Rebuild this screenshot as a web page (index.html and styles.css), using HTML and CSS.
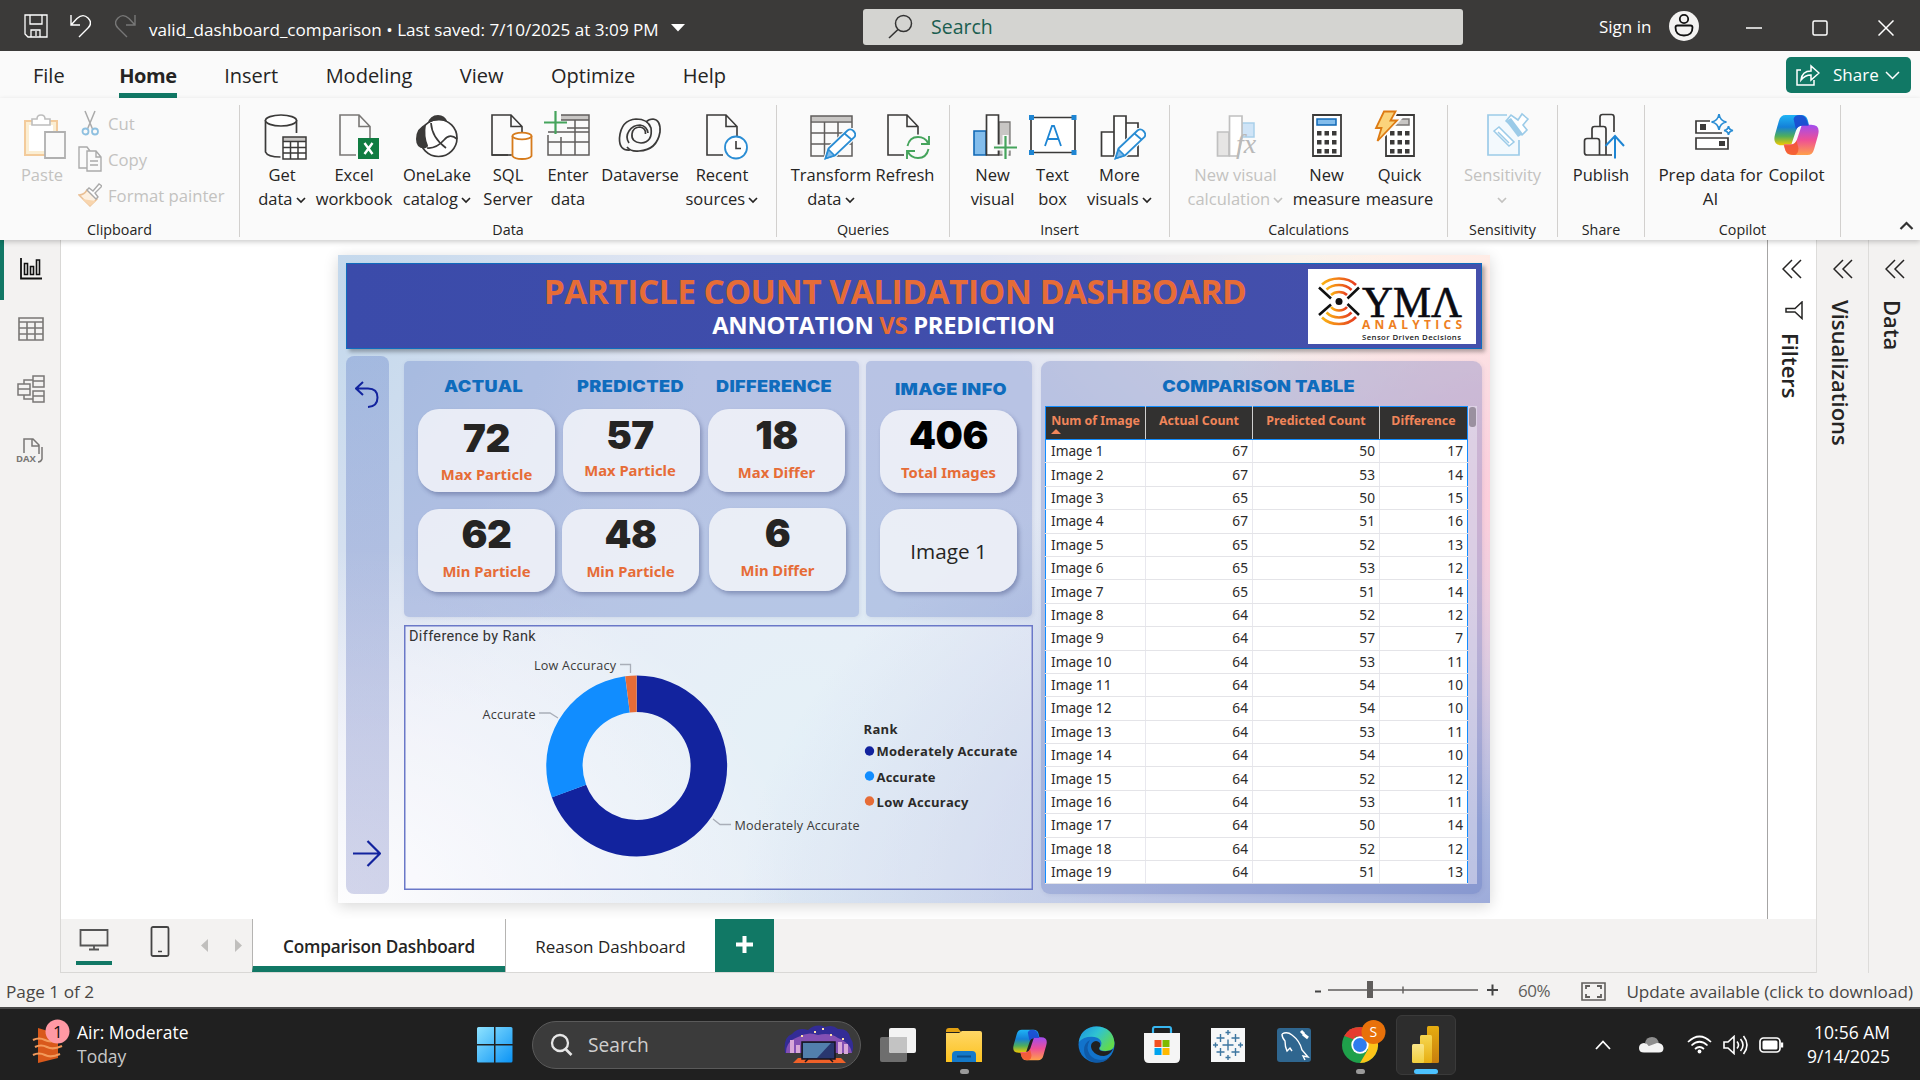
FILE: index.html
```html
<!DOCTYPE html>
<html lang="en">
<head>
<meta charset="utf-8">
<title>valid_dashboard_comparison</title>
<link rel="stylesheet" href="styles.css">
</head>
<body>
<svg class="defs" width="0" height="0" aria-hidden="true">
  <defs>
    <linearGradient id="cpA" x1="0" y1="0" x2="0" y2="1"><stop offset="0" stop-color="#1fb4f5"/><stop offset=".4" stop-color="#1480d8"/><stop offset=".7" stop-color="#4fae5c"/><stop offset="1" stop-color="#f4c900"/></linearGradient>
    <linearGradient id="cpB" x1="0" y1="0" x2="0" y2="1"><stop offset="0" stop-color="#a04cf0"/><stop offset=".5" stop-color="#ee4f96"/><stop offset="1" stop-color="#ffa04a"/></linearGradient>
    <linearGradient id="winG" x1="0" y1="0" x2="1" y2="1"><stop offset="0" stop-color="#8fe3ff"/><stop offset="1" stop-color="#0a93f5"/></linearGradient>
    <linearGradient id="fold" x1="0" y1="0" x2="0" y2="1"><stop offset="0" stop-color="#ffd766"/><stop offset="1" stop-color="#fcc21f"/></linearGradient>
    <linearGradient id="edgeA" x1="0" y1="0" x2="1" y2=".6"><stop offset="0" stop-color="#1a8fe0"/><stop offset=".5" stop-color="#2fc3d2"/><stop offset="1" stop-color="#62da4c"/></linearGradient>
    <linearGradient id="pbA" x1="0" y1="0" x2="0" y2="1"><stop offset="0" stop-color="#e6ad10"/><stop offset="1" stop-color="#c87e0e"/></linearGradient>
    <linearGradient id="pbB" x1="0" y1="0" x2="0" y2="1"><stop offset="0" stop-color="#f6d751"/><stop offset="1" stop-color="#e6ad10"/></linearGradient>
    <linearGradient id="pbC" x1="0" y1="0" x2="0" y2="1"><stop offset="0" stop-color="#f9e589"/><stop offset="1" stop-color="#f2cf3c"/></linearGradient>
    <linearGradient id="logoG" x1="0" y1="0" x2="1" y2="0"><stop offset="0" stop-color="#fbb413"/><stop offset="1" stop-color="#e63b1f"/></linearGradient>
    <symbol id="page" viewBox="0 0 32 42"><path d="M31 24V12.500L20 1H1v40h16M20 1v11.500h11" fill="none" stroke="currentColor" stroke-width="1.600"/></symbol>
    <symbol id="pencil" viewBox="0 0 32 32"><path d="M1.500 30.500l3-10L23.500 2.500q3-2.500 6 .500t1 6L11 27.500z" fill="#fff" stroke="#fafafa" stroke-width="4"/><path d="M1.500 30.500l3-10L23.500 2.500q3-2.500 6 .500t1 6L11 27.500zM20.500 5.500l7 6" fill="#fff" stroke="#2a8dd4" stroke-width="1.800"/><path d="M1.500 30.500l3-9 6 6z" fill="#83bdec" stroke="#2a8dd4" stroke-width="1.500"/></symbol>
    <symbol id="copilot" viewBox="0 0 46 41"><path d="M12 0h16q5 0 6.500 5l1.500 6h-7q-5 0-6.500 5l-5 15q-1.500 0-5 0H8Q-2 31 1 20L5 6Q6.500 0 12 0z" fill="url(#cpA)"/><path d="M34 41H18q-5 0-6.500-5L10 30h7q5 0 6.500-5l5-15h9.500q10 0 7 11L41 35q-1.500 6-7 6z" fill="url(#cpB)"/><path d="M26 0q6 0 7.500 5l2 6h-7q-4 0-6 4L20 4q1-4 6-4z" fill="#1b45cf" opacity=".85"/><path d="M20 41q-7 0-8.500-5L10 31h6q5 0 7-5l2 8q0 7-5 7z" fill="#f2542e" opacity=".8"/></symbol>
    <symbol id="calc" viewBox="0 0 30 43"><path d="M1 1h28v41H1z" fill="#fff" stroke="#3b3a39" stroke-width="1.800"/><path d="M5 17h4.500v4.500H5zm7.500 0H17v4.500h-4.500zm7.500 0h4.500v4.500H20zM5 26h4.500v4.500H5zm7.500 0H17v4.500h-4.500zm7.500 0h4.500v4.500H20zM5 35h4.500v4.500H5zm7.500 0H17v4.500h-4.500zm7.500 0h4.500v4.500H20z" fill="#3b3a39"/></symbol>
    <symbol id="dbl" viewBox="0 0 20 20"><path d="M10 1L1 10l9 9M19 1l-9 9 9 9" fill="none" stroke="#252423" stroke-width="1.500"/></symbol>
    <symbol id="chev" viewBox="0 0 10 7"><path d="M1 1l4 4 4-4" fill="none" stroke="currentColor" stroke-width="1.700"/></symbol>
  </defs>
</svg>

<div class="screen">
<header class="titlebar">
  <svg class="tb-save" width="24" height="24" viewBox="0 0 24 24"><path d="M1 1h22v22H4l-3-3zM6 1v9h12V1M7 23v-7h9v7M12 17v5" fill="none" stroke="#fff" stroke-width="1.300"/></svg>
  <svg class="tb-undo" width="21" height="24" viewBox="0 0 21 24"><path d="M1 1v10h9M1 11L7 4.500Q13-1 18 4t0 10l-9 9" fill="none" stroke="#fff" stroke-width="1.400"/></svg>
  <svg class="tb-redo" width="21" height="24" viewBox="0 0 21 24"><path d="M20 1v10h-9M20 11l-6-6.500Q8-1 3 4t0 10l9 9" fill="none" stroke="#777" stroke-width="1.400"/></svg>
  <span class="tb-name">valid_dashboard_comparison • Last saved: 7/10/2025 at 3:09 PM</span>
  <svg class="tb-caret" width="14" height="8" viewBox="0 0 14 8"><path d="M0 0h14L7 7.500z" fill="#fff"/></svg>
  <div class="tb-search">
    <svg width="25" height="25" viewBox="0 0 25 25"><circle cx="15.500" cy="9.500" r="8" fill="none" stroke="#333" stroke-width="1.500"/><path d="M10 15.500L1 24" stroke="#333" stroke-width="1.600"/></svg>
    <span>Search</span>
  </div>
  <span class="tb-sign">Sign in</span>
  <svg class="tb-user" width="30" height="30" viewBox="0 0 30 30"><circle cx="15" cy="15" r="15" fill="#f3f2f1"/><circle cx="15" cy="8" r="4.200" fill="none" stroke="#111" stroke-width="1.800"/><path d="M6.500 16.500q0-2 2-2h13q2 0 2 2 0 8-8.500 8t-8.500-8z" fill="none" stroke="#111" stroke-width="1.800"/></svg>
  <svg class="tb-min" width="16" height="16" viewBox="0 0 16 16"><path d="M0 8h16" stroke="#fff" stroke-width="1.500"/></svg>
  <svg class="tb-max" width="16" height="16" viewBox="0 0 16 16"><rect x="1" y="1" width="14" height="14" rx="1.500" fill="none" stroke="#fff" stroke-width="1.500"/></svg>
  <svg class="tb-close" width="16" height="16" viewBox="0 0 16 16"><path d="M.5.5l15 15M15.500.5l-15 15" stroke="#fff" stroke-width="1.500"/></svg>
</header>

<nav class="menu">
  <span>File</span><span class="on">Home</span><span>Insert</span><span>Modeling</span><span>View</span><span>Optimize</span><span>Help</span>
  <div class="share">
    <svg width="24" height="22" viewBox="0 0 24 22"><path d="M5 6H1v15h17v-5M5 16q1-9 10-9V2l8 7-8 7v-5q-6 0-10 5z" fill="none" stroke="#fff" stroke-width="1.500"/></svg>
    <span>Share</span>
    <svg width="15" height="9" viewBox="0 0 15 9"><path d="M1 1l6.500 6.500L14 1" fill="none" stroke="#fff" stroke-width="1.500"/></svg>
  </div>
</nav>

<section class="ribbon">
  <div class="group g-clip">
    <div class="items">
      <div class="btn w-paste off"><svg width="50" height="50" viewBox="0 0 50 50"><path d="M8 11h32v34H8z" fill="#fff" stroke="#f3cb9b" stroke-width="2"/><path d="M10.500 13.500h27v29h-27z" fill="none" stroke="#fbeed3" stroke-width="3"/><path d="M15 15v-6h5q0-4 4-4t4 4h5v6z" fill="#fff" stroke="#bdbdbd" stroke-width="1.600"/><path d="M28 22h20v26H28z" fill="#fafafa" stroke="#b0b0b0" stroke-width="1.800"/></svg><span>Paste</span></div>
      <div class="clip-list off">
        <div><svg width="24" height="26" viewBox="0 0 24 26"><path d="M7 1l7.500 18M17 1L9.500 19" stroke="#aaa" stroke-width="1.500"/><circle cx="7.500" cy="21.500" r="3" fill="none" stroke="#8fc0e0" stroke-width="1.800"/><circle cx="17" cy="21.500" r="3" fill="none" stroke="#8fc0e0" stroke-width="1.800"/></svg><span>Cut</span></div>
        <div><svg width="24" height="26" viewBox="0 0 24 26"><path d="M9 22H1V1h8l3 4M9 5h9l5 6v14H9zM18 5v6h5M12 15h8M12 19h8" fill="none" stroke="#aaa" stroke-width="1.400"/></svg><span>Copy</span></div>
        <div><svg width="24" height="26" viewBox="0 0 24 26"><path d="M9 8l10 9-7 7L1 13q5 0 8-5z" fill="#fdf0e0" stroke="#eabf93" stroke-width="1.500"/><path d="M4 17l14 2-6 5z" fill="#f8d5ae"/><path d="M9 8l2-2 4 3 6-7 3 2-7 7 3 4-2 2z" fill="#fff" stroke="#aaa" stroke-width="1.400"/></svg><span>Format painter</span></div>
      </div>
    </div>
    <div class="glabel">Clipboard</div>
  </div>

  <div class="group g-data">
    <div class="items">
      <div class="btn w72"><svg width="50" height="50" viewBox="0 0 50 50"><path d="M8.500 10v32q2 5 15 5M39.500 10v13" fill="none" stroke="#3b3a39" stroke-width="1.700"/><ellipse cx="24" cy="10.500" rx="15.500" ry="5.500" fill="#fff" stroke="#3b3a39" stroke-width="1.700"/><path d="M26 27h23v22H26z" fill="#fff"/><path d="M26 27h23v4H26z" fill="#c8c6c4"/><path d="M26 27h23v22H26zM26 31.500h23M26 37.500h23M26 43h23M33.500 31v18M41 31v18" fill="none" stroke="#3b3a39" stroke-width="1.500"/></svg><span>Get<br>data <svg class="cv"><use href="#chev"/></svg></span></div>
      <div class="btn w72"><svg width="50" height="50" viewBox="0 0 50 50"><g color="#797775"><use href="#page" x="10" y="4" width="32" height="42"/></g><path d="M29 28h21v21H29z" fill="#107c41"/><path d="M35.500 33l8 11M43.500 33l-8 11" stroke="#fff" stroke-width="2.400"/></svg><span>Excel<br>workbook</span></div>
      <div class="btn w94"><svg width="50" height="50" viewBox="0 0 50 50"><circle cx="26.500" cy="28" r="18.500" fill="#fff" stroke="#3b3a39" stroke-width="1.700"/><path d="M15.500 13.500Q18 5 26 5q7 0 9.500 7-10-4-20 1.500z" fill="#3b3a39"/><path d="M14 14Q4 18 4 29q0 9 8 9.500 4-1 4-3-4-9-2-21.500z" fill="#3b3a39"/><path d="M19 13q1 15 15 25M15 38q9 1 17-8 6-7 13-1" fill="none" stroke="#3b3a39" stroke-width="1.700"/></svg><span>OneLake<br>catalog <svg class="cv"><use href="#chev"/></svg></span></div>
      <div class="btn w48"><svg width="50" height="50" viewBox="0 0 50 50"><g color="#3b3a39"><use href="#page" x="8" y="4" width="32" height="42"/></g><path d="M8.800 45h20" stroke="#3b3a39" stroke-width="1.600"/><path d="M29.500 26v20q2 3 9.500 3t9.500-3V26" fill="#fff" stroke="#d67b1c" stroke-width="1.800"/><ellipse cx="39" cy="26" rx="9.500" ry="3.300" fill="#fff" stroke="#d67b1c" stroke-width="1.800"/></svg><span>SQL<br>Server</span></div>
      <div class="btn w72"><svg width="50" height="50" viewBox="0 0 50 50"><path d="M18 5h28v5H18z" fill="#c8c6c4"/><path d="M18 5h28v40H5V25M18 10h28M24 18h22M5 32h41M5 22h41M32 10v35M18 27v18" fill="none" stroke="#605e5c" stroke-width="1.500"/><path d="M1 12.500h23M12.500 1v23" stroke="#45a45c" stroke-width="2.200"/></svg><span>Enter<br>data</span></div>
      <div class="btn w72"><svg width="50" height="50" viewBox="0 0 50 50"><g fill="none" stroke="#3b3a39" stroke-width="1.700"><path d="M15 40Q4 41 4.500 28 6 10 21 9q12 0 15 9 2 14-10 15-10-1-9-9 1-7 8-7 6 1 5.500 7"/><path d="M12 37q4 5 12 4 18-1 21-19 1-12-7-13-4 0-7 3M14 33q-4-6 0-12 4-6 11-6 7 1 8 8"/></g></svg><span>Dataverse</span></div>
      <div class="btn w92"><svg width="50" height="50" viewBox="0 0 50 50"><g color="#3b3a39"><use href="#page" x="9" y="4" width="32" height="42"/></g><circle cx="39" cy="37.500" r="11" fill="#fff" stroke="#2a8dd4" stroke-width="1.800"/><path d="M39 31v7.500h5" fill="none" stroke="#3b3a39" stroke-width="1.600"/></svg><span>Recent<br>sources <svg class="cv"><use href="#chev"/></svg></span></div>
    </div>
    <div class="glabel">Data</div>
  </div>

  <div class="group g-query">
    <div class="items">
      <div class="btn w88"><svg width="50" height="50" viewBox="0 0 50 50"><path d="M5 6h41v5H5z" fill="#c8c6c4"/><path d="M5 6h41v40H5zM5 12h41M5 23h41M5 34h41M18.500 12v34M32 12v34" fill="none" stroke="#605e5c" stroke-width="1.500"/><use href="#pencil" x="18" y="18" width="32" height="32"/></svg><span>Transform<br>data <svg class="cv"><use href="#chev"/></svg></span></div>
      <div class="btn w60"><svg width="50" height="50" viewBox="0 0 50 50"><g color="#3b3a39"><use href="#page" x="7" y="4" width="32" height="42"/></g><circle cx="38" cy="37.500" r="13" fill="#fafafa"/><path d="M27.500 36q2-9 10.500-9 7 0 10 6M49 26v8h-8M48.500 39q-2 9-10.500 9-7 0-10-6M27 49v-8h8" fill="none" stroke="#45a45c" stroke-width="1.900"/></svg><span>Refresh</span></div>
    </div>
    <div class="glabel">Queries</div>
  </div>

  <div class="group g-insert">
    <div class="items">
      <div class="btn w56"><svg width="50" height="50" viewBox="0 0 50 50"><path d="M31 12h11v33H31z" fill="#c8c6c4" stroke="#797775" stroke-width="1.300"/><path d="M6 21h12v24H6z" fill="#83bdec" stroke="#1168b5" stroke-width="1.600"/><path d="M18.500 5h12v40h-12z" fill="#fff" stroke="#3b3a39" stroke-width="1.700"/><path d="M25 37.500h25M37.500 25v25" stroke="#fafafa" stroke-width="6"/><path d="M26 37.500h23M37.500 26v23" stroke="#45a45c" stroke-width="2.200"/></svg><span>New<br>visual</span></div>
      <div class="btn w64"><svg width="50" height="50" viewBox="0 0 50 50"><path d="M3 7.500h44v35H3z" fill="#fff" stroke="#3b3a39" stroke-width="1.700"/><path d="M1 5h5v5H1zm42.500 0h5v5h-5zM1 40h5v5H1zm42.500 0h5v5h-5z" fill="#1e85d3"/><path d="M17 36l7-20h2l7 20M19.500 29h11" fill="none" stroke="#1e85d3" stroke-width="1.800"/></svg><span>Text<br>box</span></div>
      <div class="btn w70"><svg width="50" height="50" viewBox="0 0 50 50"><path d="M6.500 22H19v24H6.500zM31 13h12v33H31zM19 6h12v40H19z" fill="#fff" stroke="#3b3a39" stroke-width="1.700"/><use href="#pencil" x="19" y="18" width="32" height="32"/></svg><span>More<br>visuals <svg class="cv"><use href="#chev"/></svg></span></div>
    </div>
    <div class="glabel">Insert</div>
  </div>

  <div class="group g-calc">
    <div class="items">
      <div class="btn w102 off"><svg width="50" height="50" viewBox="0 0 50 50"><path d="M6.500 22H18v24H6.500z" fill="#e6e5e4" stroke="#c0c0c0" stroke-width="1.700"/><path d="M31 13h12v14H31z" fill="#cfe4f7" stroke="#a9cfea" stroke-width="1.500"/><path d="M18.500 6H31v22l-4 18h-8.500z" fill="#fff" stroke="#c0c0c0" stroke-width="1.700"/><text x="25" y="43" class="fx">fx</text></svg><span>New visual<br>calculation <svg class="cv"><use href="#chev"/></svg></span></div>
      <div class="btn w80"><svg width="50" height="50" viewBox="0 0 50 50"><use href="#calc" x="10" y="4" width="30" height="43"/><path d="M15 9h19v6H15z" fill="#83bdec" stroke="#1168b5" stroke-width="1.500"/></svg><span>New<br>measure</span></div>
      <div class="btn w66"><svg width="50" height="50" viewBox="0 0 50 50"><use href="#calc" x="10" y="4" width="30" height="43"/><path d="M15 9h19v6H15z" fill="#c8c6c4" stroke="#797775" stroke-width="1.500"/><path d="M9 1.500h11.500l-5 9h6.500L2.500 31l4-13H1z" fill="#fbd37b" stroke="#fafafa" stroke-width="5"/><path d="M9 1.500h11.500l-5 9h6.500L2.500 31l4-13H1z" fill="#fbd37b" stroke="#dd7a12" stroke-width="1.800"/></svg><span>Quick<br>measure</span></div>
    </div>
    <div class="glabel">Calculations</div>
  </div>

  <div class="group g-sens">
    <div class="items">
      <div class="btn w100 off"><svg width="50" height="50" viewBox="0 0 50 50"><path d="M29 5H10v40h31V30" fill="#f3f9fd" stroke="#9ccbe8" stroke-width="1.700"/><path d="M16 21l5-4 15 15-5 4zM20 22l11 11" fill="#fff" stroke="#9ccbe8" stroke-width="1.500"/><path d="M28 11l5-6 7 5 4-6 6 5-5 6 4 5-5 5z" fill="#fff" stroke="#9ccbe8" stroke-width="1.600"/><path d="M28 11l5-3 12 16-5 3z" fill="#9ccbe8"/></svg><span>Sensitivity<br><svg class="cv"><use href="#chev"/></svg></span></div>
    </div>
    <div class="glabel">Sensitivity</div>
  </div>

  <div class="group g-share">
    <div class="items">
      <div class="btn w80"><svg width="50" height="50" viewBox="0 0 50 50"><path d="M24 17V7q0-2.500 2.500-2.500h9Q38 4.500 38 7v15M16 28v-9q0-2.500 2.500-2.500h9q2.500 0 2.500 2.500v26M23.500 45V31q0-2.500-2.500-2.500H11q-2.500 0-2.500 2.500v11.500Q8.500 45 11 45h25" fill="none" stroke="#3b3a39" stroke-width="1.700"/><path d="M39 48.500V26M29.500 36l9.500-10 9 10" fill="none" stroke="#1e85d3" stroke-width="2"/></svg><span>Publish</span></div>
    </div>
    <div class="glabel">Share</div>
  </div>

  <div class="group g-cop">
    <div class="items">
      <div class="btn w110"><svg width="50" height="50" viewBox="0 0 50 50"><path d="M24 11H10v12h26M10 28h32v11H10z" fill="#fff" stroke="#3b3a39" stroke-width="1.700"/><path d="M14 14h6v6h-6zM33 31h6v5h-6z" fill="#3b3a39"/><path d="M33 4q1 7 7.500 8-6.500 1-7.500 8-1-7-7.500-8 6.500-1 7.500-8zM42.500 16q.5 4 4.500 4.500-4 .5-4.500 4.500-.5-4-4.500-4.500 4-.5 4.500-4.500z" fill="#fff" stroke="#2a8dd4" stroke-width="1.700"/></svg><span>Prep data for<br>AI</span></div>
      <div class="btn copbtn"><svg width="50" height="50" viewBox="0 0 50 50"><use href="#copilot" x="2" y="5" width="45" height="40"/></svg><span>Copilot</span></div>
    </div>
    <div class="glabel">Copilot</div>
  </div>
  <div class="collapse"><svg width="15" height="9" viewBox="0 0 15 9"><path d="M1.500 8l6-6 6 6" fill="none" stroke="#333" stroke-width="2.200"/></svg></div>
</section>

<main class="work">
  <aside class="views">
    <div class="view on"><svg width="22" height="22" viewBox="0 0 22 22"><path d="M1 0v20.500h21" fill="none" stroke="#111" stroke-width="1.800"/><path d="M4.500 5.500h3v11h-3zM10.500 8.500h3v8h-3zM16.500 2h3v14.500h-3z" fill="none" stroke="#111" stroke-width="1.600"/></svg></div>
    <div class="view"><svg width="26" height="24" viewBox="0 0 26 24"><path d="M1 1h24v22H1zM1 5h24M1 11h24M1 17h24M9 5v18M17 5v18" fill="none" stroke="#797775" stroke-width="1.600"/></svg></div>
    <div class="view"><svg width="28" height="28" viewBox="0 0 28 28"><path d="M1 9h12v11H1zM1 14h12M16 1h11v11H16zM16 6h11M16 16h11v11H16zM16 21h11M7 9V5h9M7 20v4h9" fill="none" stroke="#797775" stroke-width="1.500"/></svg></div>
    <div class="view vdax"><svg width="28" height="26" viewBox="0 0 28 26"><path d="M8 15V1h9l6 6v9M16 1v7h7M26 9v12q-1 3-4 3" fill="none" stroke="#797775" stroke-width="1.500"/><text x="0" y="24" class="dax">DAX</text></svg></div>
  </aside>

  <div class="center">
    <div class="upper">
      <div class="stage">
        <div class="report">
          <div class="banner">
            <div class="titles">
              <h1>PARTICLE COUNT VALIDATION DASHBOARD</h1>
              <h2>ANNOTATION <em>VS</em> PREDICTION</h2>
            </div>
            <svg class="logo" width="168" height="75" viewBox="0 0 168 75">
              <g fill="none" stroke="url(#logoG)" stroke-width="2.600">
                <path d="M14 15.500q6.500-6 17-6t17 6.500M14 48.500q6.500 6.500 17 6.500t17-7"/>
                <path d="M18.500 20.500q5-4.500 12.500-4.500t12.500 5M18.500 43.500q5 5 12.500 5t12.500-5"/>
                <path d="M23 26q3-3 8-3t8 3M23 38q3 3.500 8 3.500t8-3.500"/>
              </g>
              <path d="M11 18.500l12 11M51 18.500l-11.500 11M11 46l12-10.500M51 46L39.500 35" stroke="#111" stroke-width="2.600"/>
              <circle cx="31" cy="32.500" r="3.500" fill="#111"/>
              <text x="54" y="47.500" class="l-yma" textLength="100" lengthAdjust="spacingAndGlyphs">YMΛ</text>
              <text x="54" y="60" class="l-an" textLength="100">ANALYTICS</text>
              <text x="54" y="70.500" class="l-sen" textLength="99">Sensor Driven Decisions</text>
            </svg>
          </div>

          <div class="body">
            <div class="rail">
              <svg width="24" height="27" viewBox="0 0 24 27"><path d="M8 1L1 7.500 8 14M1 7.500h12q9.500 0 9.500 9T13 26" fill="none" stroke="#12239e" stroke-width="2"/></svg>
              <svg width="28" height="27" viewBox="0 0 28 27"><path d="M0 13.500h26M14.500 1L27 13.500 14.500 26" fill="none" stroke="#12239e" stroke-width="2.200"/></svg>
            </div>
            <div class="mid">
              <div class="kpis">
                <div class="panel p-kpi">
                  <div class="col c1"><h3>ACTUAL</h3>
                    <div class="card low"><b>72</b><i>Max Particle</i></div>
                    <div class="card"><b>62</b><i>Min Particle</i></div></div>
                  <div class="col c2"><h3>PREDICTED</h3>
                    <div class="card up"><b>57</b><i>Max Particle</i></div>
                    <div class="card"><b>48</b><i>Min Particle</i></div></div>
                  <div class="col c3"><h3>DIFFERENCE</h3>
                    <div class="card mdl"><b>18</b><i>Max Differ</i></div>
                    <div class="card"><b>6</b><i>Min Differ</i></div></div>
                </div>
                <div class="panel p-info">
                  <div class="col c4"><h3>IMAGE INFO</h3>
                    <div class="card blk"><b>406</b><i>Total Images</i></div>
                    <div class="card sel">Image 1</div></div>
                </div>
              </div>
              <svg class="chart" width="629" height="265" viewBox="404 625 629 265">
                <rect x="404.750" y="625.750" width="627.500" height="263.500" fill="rgba(250,250,255,.25)" stroke="#6a78c8" stroke-width="1.500"/>
                <text x="409" y="641" class="c-title">Difference by Rank</text>
                <g fill="none" stroke-width="36.500">
                  <circle cx="636.700" cy="766" r="72.200" stroke="#12239e" pathLength="360" stroke-dasharray="249.700 360" transform="rotate(-90 636.700 766)"/>
                  <circle cx="636.700" cy="766" r="72.200" stroke="#118dff" pathLength="360" stroke-dasharray="103 360" transform="rotate(159.700 636.700 766)"/>
                  <circle cx="636.700" cy="766" r="72.200" stroke="#e66c37" pathLength="360" stroke-dasharray="7.300 360" transform="rotate(262.700 636.700 766)"/>
                </g>
                <path d="M620 664.500h10.500V673M539 713h11l8 5M713 819l7 5.500h11" fill="none" stroke="#a9aeb8" stroke-width="1.300"/>
                <g class="c-lab">
                  <text x="534" y="670" textLength="82">Low Accuracy</text>
                  <text x="482.500" y="719" textLength="53">Accurate</text>
                  <text x="734.500" y="830" textLength="125">Moderately Accurate</text>
                </g>
                <g class="c-leg">
                  <text x="863.500" y="734" textLength="34">Rank</text>
                  <text x="876.500" y="756" textLength="141">Moderately Accurate</text>
                  <text x="876.500" y="782" textLength="59">Accurate</text>
                  <text x="876.500" y="807" textLength="92">Low Accuracy</text>
                </g>
                <circle cx="869.500" cy="751" r="4.700" fill="#12239e"/><circle cx="869.500" cy="776" r="4.700" fill="#118dff"/><circle cx="869.500" cy="801" r="4.700" fill="#e66c37"/>
              </svg>
            </div>
            <div class="panel p-table">
              <h3>COMPARISON TABLE</h3>
              <div class="tblwrap">
                <table>
                  <colgroup><col class="k1"><col class="k2"><col class="k3"><col class="k4"></colgroup>
                  <thead><tr><th class="sorted">Num of Image</th><th>Actual Count</th><th>Predicted Count</th><th>Difference</th></tr></thead>
                  <tbody>
                    <tr><td>Image 1</td><td>67</td><td>50</td><td>17</td></tr>
                    <tr><td>Image 2</td><td>67</td><td>53</td><td>14</td></tr>
                    <tr><td>Image 3</td><td>65</td><td>50</td><td>15</td></tr>
                    <tr><td>Image 4</td><td>67</td><td>51</td><td>16</td></tr>
                    <tr><td>Image 5</td><td>65</td><td>52</td><td>13</td></tr>
                    <tr><td>Image 6</td><td>65</td><td>53</td><td>12</td></tr>
                    <tr><td>Image 7</td><td>65</td><td>51</td><td>14</td></tr>
                    <tr><td>Image 8</td><td>64</td><td>52</td><td>12</td></tr>
                    <tr><td>Image 9</td><td>64</td><td>57</td><td>7</td></tr>
                    <tr><td>Image 10</td><td>64</td><td>53</td><td>11</td></tr>
                    <tr><td>Image 11</td><td>64</td><td>54</td><td>10</td></tr>
                    <tr><td>Image 12</td><td>64</td><td>54</td><td>10</td></tr>
                    <tr><td>Image 13</td><td>64</td><td>53</td><td>11</td></tr>
                    <tr><td>Image 14</td><td>64</td><td>54</td><td>10</td></tr>
                    <tr><td>Image 15</td><td>64</td><td>52</td><td>12</td></tr>
                    <tr><td>Image 16</td><td>64</td><td>53</td><td>11</td></tr>
                    <tr><td>Image 17</td><td>64</td><td>50</td><td>14</td></tr>
                    <tr><td>Image 18</td><td>64</td><td>52</td><td>12</td></tr>
                    <tr><td>Image 19</td><td>64</td><td>51</td><td>13</td></tr>
                  </tbody>
                </table>
                <div class="scroll"><div class="thumb"></div></div>
              </div>
            </div>
          </div>
        </div>
      </div>
      <aside class="pane filters"><svg class="dbl"><use href="#dbl"/></svg><svg class="fun" width="18" height="19" viewBox="0 0 18 19"><path d="M17 1v16.500L10 11H1V7.500h9z" fill="none" stroke="#252423" stroke-width="1.500"/></svg><span>Filters</span></aside>
    </div>
    <div class="pages">
      <div class="device on"><svg width="30" height="22" viewBox="0 0 30 22"><path d="M1.500 1h27v15.500h-27zM15 16.500V20M10 20.500h10" fill="none" stroke="#555" stroke-width="1.800"/></svg></div>
      <div class="device phone"><svg width="20" height="31" viewBox="0 0 20 31"><rect x="1.500" y="1" width="17" height="29" rx="1.500" fill="none" stroke="#444" stroke-width="1.800"/><path d="M8 25.500h4" stroke="#444" stroke-width="1.500"/></svg></div>
      <div class="arrows"><svg width="7" height="13" viewBox="0 0 7 13"><path d="M7 0v13L0 6.500z" fill="#c0bfbd"/></svg><svg width="7" height="13" viewBox="0 0 7 13"><path d="M0 0v13l7-6.500z" fill="#c0bfbd"/></svg></div>
      <div class="tab on">Comparison Dashboard</div>
      <div class="tab">Reason Dashboard</div>
      <div class="add"><svg width="17" height="17" viewBox="0 0 17 17"><path d="M8.500 0v17M0 8.500h17" stroke="#fff" stroke-width="4"/></svg></div>
    </div>
  </div>
  <aside class="pane viz"><svg class="dbl"><use href="#dbl"/></svg><span>Visualizations</span></aside>
  <aside class="pane data"><svg class="dbl"><use href="#dbl"/></svg><span>Data</span></aside>
</main>

<footer class="status">
  <span class="pg">Page 1 of 2</span>
  <svg class="zoomer" width="184" height="20" viewBox="1315 982 184 20"><path d="M1315 992.500h6M1487 991h11M1492.500 985.500v11" stroke="#444" stroke-width="2"/><path d="M1328 991h150M1403 987.500v7" stroke="#605e5c" stroke-width="1.400"/><path d="M1367 982h6v17h-6z" fill="#605e5c"/></svg>
  <span class="pct">60%</span>
  <svg class="fit" width="25" height="19" viewBox="0 0 25 19"><path d="M1 1h23v17H1z" fill="none" stroke="#605e5c" stroke-width="1.600"/><path d="M5 7V4h4M16 4h4v3M20 12v3h-4M9 15H5v-3" fill="none" stroke="#605e5c" stroke-width="1.800"/></svg>
  <span class="upd">Update available (click to download)</span>
</footer>

<section class="taskbar">
  <div class="weather">
    <svg width="38" height="46" viewBox="0 0 38 46"><path d="M6 9l20 6v24L6 44z" fill="#d9591b"/><g fill="none" stroke="#f39a5b" stroke-width="2.200"><path d="M1 21q6-3 12 0t15-1M3 28q6-3 12 0t15-1M1 36q6-3 12 0t15-1"/></g><circle cx="25.500" cy="12.500" r="12" fill="#ff99a4"/><text x="21" y="19" class="one">1</text></svg>
    <div><p>Air: Moderate</p><p class="dim">Today</p></div>
  </div>
  <svg class="start" width="36" height="36" viewBox="0 0 36 36"><path d="M0 1.500Q0 0 1.500 0H17v17H0zM18.500 0h15.500Q35.500 0 35.500 1.500V17h-17zM0 18.500h17v17H1.500Q0 35.500 0 34zM18.500 18.500h17V34q0 1.500-1.500 1.500H18.500z" fill="url(#winG)"/></svg>
  <div class="tsearch">
    <svg width="23" height="23" viewBox="0 0 23 23"><circle cx="10" cy="10" r="8" fill="none" stroke="#e6e6e6" stroke-width="2.300"/><path d="M15.500 16l6 6" stroke="#e6e6e6" stroke-width="2.600"/></svg>
    <span>Search</span>
    <svg class="tv" width="70" height="40" viewBox="0 0 70 40"><path d="M1 28Q-1 12 8 9 14 2 24 5q8-7 17-3 8-3 13 2 10-1 12 8 5 7 2 16H2z" fill="#332c96"/><path d="M2 28q0-12 12-16 10-6 20-2 12-3 20 3 12 4 14 15z" fill="#8450b4"/><path d="M6 15h4v13H6zM12 20h4v8h-4zM54 17h4v12h-4zM60 19h4v10h-4z" fill="#d8a8d8"/><path d="M17 10h2v2h-2zM30 6h2v2h-2zM46 9h2v2h-2zM58 13h2v2h-2zM38 3h2v2h-2z" fill="#ffe0a8"/><path d="M14 33h43l5 5H9z" fill="#ef6129"/><rect x="18" y="17" width="33" height="17" fill="#29376f" stroke="#16151e" stroke-width="1.500"/><path d="M19 18h28L33 33H19z" fill="#5d91bb" opacity=".8"/><path d="M24 34l-3 3M46 34l3 3" stroke="#16151e" stroke-width="1.500"/></svg>
  </div>
  <div class="apps">
    <div class="app"><svg width="38" height="38" viewBox="0 0 38 38"><rect x="1" y="11" width="27" height="25" rx="2" fill="#6e6e6e"/><rect x="10" y="2" width="27" height="25" rx="2" fill="#f3f3f3"/><path d="M10 11h18v16H12q-2 0-2-2z" fill="#c3c3c3"/></svg></div>
    <div class="app run"><svg width="38" height="38" viewBox="0 0 38 38"><path d="M1 5q0-3 3-3h9l3 4H1z" fill="#e2a012"/><path d="M1 7h13l3-2h18q2 0 2 2v29H1z" fill="url(#fold)"/><path d="M7 36V29q0-4 4-4h16q4 0 4 4v7z" fill="#1479c9"/><path d="M12 30.500h14" stroke="#0c4f8c" stroke-width="2"/></svg></div>
    <div class="app"><svg width="34" height="32" viewBox="0 0 34 32"><use href="#copilot" width="34" height="32"/></svg></div>
    <div class="app"><svg width="37" height="37" viewBox="0 0 37 37"><circle cx="18.500" cy="18.500" r="18" fill="#1273cb"/><path d="M.8 16Q3 1 18.500.5 35 1 36.500 17q0 8-9 8-6 0-6-3 2-2 2-5-1-5-7-6Q6 10 .8 16z" fill="url(#edgeA)"/><path d="M12 14q-5 8 0 15 7 8 19 3-6 6-16 4-9-3-9-12 0-7 6-10z" fill="#0f5aa8"/><path d="M14 17q4-4 8 0 1 3-1 5 0 4 8 3 4 0 6-2-3 6-9 7-8 0-12-6-2-4 0-7z" fill="#202020"/></svg></div>
    <div class="app"><svg width="36" height="37" viewBox="0 0 36 37"><path d="M9 9V3q0-2 2-2h14q2 0 2 2v6" fill="none" stroke="#38b6f0" stroke-width="2.200"/><path d="M0 7h36v25q0 5-5 5H5q-5 0-5-5z" fill="#f5f5f5"/><path d="M10.500 14h7v7h-7z" fill="#f25022"/><path d="M18.500 14h7v7h-7z" fill="#7fba00"/><path d="M10.500 22h7v7h-7z" fill="#00a4ef"/><path d="M18.500 22h7v7h-7z" fill="#ffb900"/></svg></div>
    <div class="app"><svg width="34" height="34" viewBox="0 0 34 34"><path d="M0 0h34v34H0z" fill="#f6f7f8"/><path d="M17 11.500v11M11.500 17h11M9.500 6v8M5.500 10h8M24.500 6v8M20.500 10h8M9.500 20v8M5.500 24h8M24.500 20v8M20.500 24h8M17 2v5M14.500 4.500h5M17 27v5M14.500 29.500h5M4.500 14.500v5M2 17h5M29.500 14.500v5M27 17h5" stroke="#3d76a0" stroke-width="1.400"/></svg></div>
    <div class="app"><svg width="34" height="34" viewBox="0 0 34 34"><rect width="34" height="34" rx="3" fill="#2f668f"/><path d="M5 6q5-3 10 1 8 6 10 15l6 7-5-1 2 4M5 6q0 4 3 7 0 6 2 10l3-3 2 3" fill="none" stroke="#fff" stroke-width="1.400"/><path d="M24 3l3 3M26 6l5 4" stroke="#fff" stroke-width="3"/></svg></div>
    <div class="app run chrome"><svg width="44" height="44" viewBox="0 0 44 44"><circle cx="18" cy="26" r="18" fill="#1fa04b"/><path d="M2.400 17A18 18 0 0 1 33.600 17L18 18z" fill="#e63b2e"/><path d="M2.400 17L10 30.500 18 18z" fill="#1fa04b"/><path d="M2.400 17q3-6 9-8l2 12z" fill="#e63b2e"/><path d="M18 18h16.200A18 18 0 0 1 18 44l8-13.500z" fill="#fcc419"/><circle cx="18" cy="26" r="8.700" fill="#fff"/><circle cx="18" cy="26" r="6.900" fill="#2f7cee"/><circle cx="31.500" cy="13" r="12" fill="#e8710a"/><text x="27.500" y="18" class="s">S</text></svg></div>
    <div class="app active"><svg width="28" height="37" viewBox="0 0 28 37"><rect x="15" width="12" height="37" rx="1.500" fill="url(#pbA)"/><rect x="8" y="9" width="12" height="28" rx="1.500" fill="url(#pbB)"/><rect y="18" width="12" height="19" rx="1.500" fill="url(#pbC)"/></svg></div>
  </div>
  <div class="tray">
    <svg class="t-up" width="16" height="10" viewBox="0 0 16 10"><path d="M1 9l7-7.500L15 9" fill="none" stroke="#fff" stroke-width="1.800"/></svg>
    <svg class="t-cloud" width="25" height="17" viewBox="0 0 25 17"><path d="M6 7q1-6 7-6t7 7l-7 4z" fill="#8f8f8f"/><path d="M5 16.500q-5 0-5-4.500t5-5q3 0 5 3l8-3q6 0 6.500 5 0 4.500-4.500 4.500z" fill="#f4f4f4"/></svg>
    <svg class="t-wifi" width="25" height="19" viewBox="0 0 25 19"><g fill="none" stroke="#fff" stroke-width="1.700"><path d="M1 7q11.500-11 23 0M4.500 10.500q8-7.500 16 0M8 14q4.500-4 9 0"/></g><circle cx="12.500" cy="16.500" r="1.900" fill="#fff"/></svg>
    <svg class="t-vol" width="25" height="20" viewBox="0 0 25 20"><path d="M1 7h4l6-5.500v17L5 13H1zM14 6.500q3 3.500 0 7M17.500 4q5 6 0 12M20.500 1q7 9 0 18" fill="none" stroke="#fff" stroke-width="1.600"/></svg>
    <svg class="t-bat" width="25" height="16" viewBox="0 0 25 16"><rect x="1" y="1" width="20" height="14" rx="3.500" fill="none" stroke="#fff" stroke-width="1.700"/><rect x="3.500" y="3.500" width="15" height="9" rx="1.500" fill="#fff"/><path d="M23 5.500v5" stroke="#fff" stroke-width="2.400"/></svg>
    <div class="clock"><p>10:56 AM</p><p>9/14/2025</p></div>
  </div>
</section>
</div>
</body>
</html>
```
FILE: styles.css
```css
* { box-sizing: border-box; }
body { margin: 0; background: #fff; overflow: hidden; }
.defs { position: absolute; }
h1, h2, h3, p { margin: 0; }
.screen {
  width: 1920px; height: 1080px; display: flex; flex-direction: column;
  font-family: "Open Sans", "Noto Sans", sans-serif; font-size: 16.5px; color: #252423;
}
svg { flex: none; display: block; }

/* title bar */
.titlebar { height: 51px; flex: none; background: #3b3a39; color: #fff; display: flex; align-items: center; padding-left: 24px; }
.tb-undo { margin-left: 22px; }
.tb-redo { margin-left: 24px; }
.tb-name { width: 514px; margin-left: 13px; padding-top: 7px; white-space: nowrap; font-size: 17.100px; }
.tb-caret { margin: 5px 0 0 8px; }
.tb-search {
  width: 600px; height: 36px; margin-left: 178px; background: #d4d4d1; border-radius: 3px;
  display: flex; align-items: center; gap: 18px; padding-left: 25px; color: #1b5e50; font-size: 19.500px;
}
.tb-search { margin-top: 2px; }
.tb-search span { padding-bottom: 1px; }
.tb-sign { width: 56px; margin-left: 136px; white-space: nowrap; font-size: 17px; padding-top: 2px; }
.tb-user { margin-left: 14px; }
.tb-min { margin: 4px 0 0 47px; }
.tb-max { margin: 5px 0 0 50px; }
.tb-close { margin: 5px 0 0 50px; }

/* menu */
.menu { height: 47px; flex: none; background: #fafafa; display: flex; align-items: stretch; padding-left: 33px; gap: 47.500px; font-size: 20px; line-height: 49px; }
.menu > span { letter-spacing: 0; }
.menu > .on { font-weight: 700; margin-left: 7px; border-bottom: 5px solid #117865; letter-spacing: -.4px; }
.share {
  width: 125px; height: 36px; margin: 6px 9px 0 auto; border-radius: 5px; background: #117865; color: #fff;
  display: flex; align-items: center; padding-left: 10px; font-size: 17px; line-height: 36px;
}
.share span { margin: 0 6px 0 13px; }

/* ribbon */
.ribbon { height: 142px; flex: none; background: #fafafa; display: flex; padding-top: 7px; box-shadow: 0 2px 5px rgba(0,0,0,.2); position: relative; z-index: 2; }
.group { height: 132px; border-right: 1px solid #d2d0ce; display: flex; flex-direction: column; }
.items { flex: 1; display: flex; justify-content: center; padding-top: 5px; min-height: 0; }
.glabel { text-align: center; font-size: 14.300px; line-height: 20px; margin-bottom: -3px; }
.g-clip { width: 240px; } .g-data { width: 537px; } .g-query { width: 173px; } .g-insert { width: 220px; }
.g-calc { width: 278px; } .g-sens { width: 110px; } .g-share { width: 87px; } .g-cop { width: 196px; }
.g-data .items { justify-content: flex-start; padding-left: 6px; }
.g-query .items, .g-cop .items { justify-content: flex-start; padding-left: 10px; }
.btn { display: flex; flex-direction: column; align-items: center; text-align: center; white-space: nowrap; line-height: 24px; }
.btn > span { margin-top: 3px; }
.btn > svg { overflow: visible; }
.off { color: #c3c2c0; }
.cv { display: inline-block; width: 10px; height: 7px; margin-left: -1px; vertical-align: 1px; }
.w48 { width: 48px; } .w56 { width: 56px; } .w60 { width: 60px; } .w64 { width: 64px; } .w66 { width: 66px; }
.w70 { width: 70px; } .w72 { width: 72px; } .w80 { width: 80px; } .w88 { width: 88px; } .w92 { width: 92px; }
.w94 { width: 94px; } .w100 { width: 100px; } .w102 { width: 102px; } .w110 { width: 111px; font-size: 17px; }
.copbtn { width: 61px; font-size: 17px; }
.fx { font: italic 28px "Liberation Serif", serif; fill: #b9b9b9; }
.g-clip .items { justify-content: flex-start; padding-left: 17px; }
.w-paste { width: 50px; }
.clip-list { margin-left: 11px; display: flex; flex-direction: column; gap: 10px; }
.clip-list div { height: 26px; display: flex; align-items: center; gap: 6px; white-space: nowrap; font-size: 16.700px; }
.collapse { margin: 116px 0 0 58px; }

/* work area */
.work { height: 733px; flex: none; display: flex; }
.views { width: 61px; background: #f3f2f1; border-right: 1px solid #d9d8d6; }
.view { height: 60px; display: flex; align-items: center; padding: 0 0 2px 18px; }
.view.on { border-left: 4px solid #117865; padding-left: 16px; }
.view:nth-child(3) { padding-left: 17px; }
.vdax { padding: 2px 0 0 16px; }
.dax { font: 700 9.500px "Open Sans", sans-serif; fill: #797775; }
.center { width: 1755px; display: flex; flex-direction: column; }
.upper { height: 679px; display: flex; }
.stage { width: 1706px; padding: 15px 0 0 277px; background: #fff; }
.pane { background: #f3f2f1; display: flex; flex-direction: column; align-items: center; padding-top: 19px; }
.pane span { writing-mode: vertical-rl; font-weight: 600; font-size: 22px; line-height: 28px; }
.dbl { width: 20px; height: 20px; }
.filters { width: 49px; background: #fff; border-left: 1px solid #a6a5a4; }
.filters span { margin: 13px 2px 0 0; }
.fun { margin: 22px 0 0 4px; }
.viz, .data { width: 52px; border-left: 1px solid #dddcda; }
.viz span, .data span { margin: 21px 4px 0 0; }

/* report page */
.report {
  width: 1152px; height: 648px; padding: 8px; box-shadow: 0 3px 14px rgba(0,0,0,.16);
  background:
    radial-gradient(ellipse 26% 50% at 101% 38%, rgba(255,205,218,.95), rgba(255,215,222,0)),
    radial-gradient(ellipse 45% 45% at 100% 0%, #fff6ea 20%, rgba(255,246,234,0)),
    radial-gradient(ellipse 65% 75% at 100% 100%, #9eacda, rgba(158,172,218,0)),
    radial-gradient(ellipse 40% 55% at 0% 100%, #fdfdfe, rgba(253,253,254,0)),
    radial-gradient(ellipse 35% 60% at 40% 75%, #deedf5, rgba(222,237,245,0)),
    radial-gradient(ellipse 32% 70% at 0% 5%, #c3d8ec, rgba(195,216,236,0)),
    #e2e6f3;
}
.banner {
  height: 86px; display: flex; align-items: center; border: 1px solid #0f6cbd; padding-right: 5px;
  background: linear-gradient(90deg, #3b4baa, #4550ac); box-shadow: 3px 3px 4px rgba(0,0,0,.3);
}
.titles { flex: 1; text-align: center; color: #fff; padding: 2px 0 0 136px; white-space: nowrap; }
h1 { font-size: 33.500px; line-height: 37px; color: #e66c37; letter-spacing: -.5px; margin-left: -1px; }
h2 { font-size: 23.800px; line-height: 31px; letter-spacing: -.3px; margin-left: -24px; }
h2 em { font-style: normal; color: #e66c37; }
.logo { background: #fff; }
.l-yma { font: 45px "Liberation Serif", serif; fill: #0b0b12; stroke: #0b0b12; stroke-width: .6; }
.l-an { font: 700 12px "Open Sans", sans-serif; fill: #ee7f22; }
.l-sen { font: 600 7.800px "Open Sans", sans-serif; fill: #222; }
.body { display: flex; padding-top: 7px; height: 546px; }
.rail {
  width: 43px; height: 538px; border-radius: 8px; background: linear-gradient(rgba(85,115,195,.32), rgba(100,110,185,.28));
  display: flex; flex-direction: column; align-items: center; justify-content: space-between; padding: 25px 2px 27px 0;
}
.mid { width: 629px; margin: 5px 0 0 15px; }
.kpis { display: flex; gap: 7px; }
.panel { background: rgba(75,105,190,.28); border-radius: 5px; box-shadow: 1px 1px 4px rgba(80,90,150,.12); }
.p-kpi { width: 455px; height: 256px; display: flex; padding-left: 14px; }
.p-info { width: 166px; padding-left: 14px; }
.col { width: 137px; }
.c2, .c3 { margin-left: 8px; }
h3 { font: 900 16px/18px Inter, "Liberation Sans", sans-serif; color: #0f6cbd; text-align: center; letter-spacing: .35px; white-space: nowrap; padding-top: 16px; height: 48px; transform: scaleX(1.13); }
.c1 h3 { margin-left: -6px; }
.c2 h3 { margin-left: -2px; }
.c3 h3 { margin-left: -5px; }
.c4 h3 { padding-top: 19px; height: 49px; margin-left: 5px; }
.card {
  height: 83px; border-radius: 21px; background: rgba(243,245,249,.85); box-shadow: 2px 3px 4px rgba(60,70,120,.4);
  display: flex; flex-direction: column; align-items: center; padding-top: 3px; margin-bottom: 17px;
}
.card b { font: 900 38.500px/44px Inter, "Liberation Sans", sans-serif; letter-spacing: -.5px; color: #252423; }
.card i { font: 700 14.800px/20px "Noto Sans", sans-serif; color: #e66c37; margin-top: 5px; white-space: nowrap; }
.card.low { padding-top: 7px; }
.card.low i { margin-top: 4px; }
.card.up { padding-top: 4px; padding-right: 3px; }
.card.up i { margin-top: 3px; }
.card.mdl { padding-top: 4px; }
.c2 .card:last-child { transform: translate(-1px, 0); }
.c3 .card:last-child { transform: translate(1px, -1px); }
.blk b { color: #000; }
.c4 .card { margin-bottom: 16px; }
.card.sel { font-size: 20.700px; line-height: 79px; }
.chart { margin-top: 8px; }
.c-title { font: 14.500px Roboto, sans-serif; fill: #333; letter-spacing: .35px; }
.c-lab { font: 12.600px "Open Sans", sans-serif; fill: #3b3a39; }
.c-leg { font: 700 13px "Open Sans", sans-serif; fill: #2b2a29; }
.p-table { width: 441px; height: 533px; margin: 5px 0 0 8px; border-radius: 9px; padding-left: 4px; background: rgba(75,95,180,.27); }
.p-table h3 { height: 45px; margin-left: -10px; letter-spacing: .2px; }
.tblwrap { display: flex; width: 432px; height: 478px; overflow: hidden; }
table { width: 422px; height: 478px; flex: none; table-layout: fixed; border-collapse: collapse; background: #fff; border: 1px solid #118dff; border-bottom: 0; font: 13.700px/20px "Noto Sans", sans-serif; color: #2b2a29; }
.k1 { width: 100px; } .k2 { width: 107px; } .k3 { width: 127px; } .k4 { width: 88px; }
th { height: 33px; background: #323130; color: #f0855a; font-size: 12.400px; line-height: 16px; padding: 0 0 5px; border: 1px solid #d0d0d0; border-top-color: #118dff; border-bottom-color: #118dff; white-space: nowrap; vertical-align: middle; }
th:first-child { border-left-color: #118dff; } th:last-child { border-right-color: #118dff; }
.sorted { position: relative; }
.sorted::after { content: ""; position: absolute; left: 5px; bottom: 5px; border: 5px solid transparent; border-top: 0; border-bottom-color: #f0855a; }
td { height: 23.400px; padding: 0 4px 0 5px; border-bottom: 1px solid #e4e4e8; border-right: 1px solid #e8e8ee; text-align: right; }
td:first-child { text-align: left; } td:last-child { border-right-color: #118dff; }
.scroll { width: 9px; background: rgba(240,235,245,.5); padding: 1px 0 0 1px; }
.thumb { width: 7px; height: 20px; border-radius: 3px; background: #9a909f; }

/* page tabs */
.pages { height: 54px; background: #f3f2f1; display: flex; border-bottom: 1px solid #d9d8d6; }
.device { width: 36px; margin-left: 15px; padding: 10px 0 0 3px; height: 46px; }
.device.on { border-bottom: 4px solid #117865; }
.device.phone { margin-left: 34px; padding: 7px 0 0 4px; }
.arrows { width: 70px; padding: 20px 10px 0 19px; display: flex; justify-content: space-between; }
.tab { width: 210px; background: #fff; border-left: 1px solid #b5b4b2; text-align: center; line-height: 55px; font-size: 17px; white-space: nowrap; }
.tab.on { width: 253px; font-size: 17.200px; font-weight: 600; letter-spacing: -.2px; border-bottom: 6px solid #117865; }
.add { width: 59px; background: #117865; display: flex; align-items: center; justify-content: center; padding-bottom: 2px; }

/* status bar */
.status { height: 34px; flex: none; background: #f3f2f1; display: flex; align-items: center; padding: 2px 7px 0 6px; color: #484644; }
.pg { width: 1309px; font-size: 17.200px; }
.pct { width: 40px; margin-left: 19px; font-size: 17px; letter-spacing: -.5px; color: #605e5c; padding-bottom: 2px; }
.fit { margin-left: 23px; }
.upd { margin-left: auto; white-space: nowrap; font-size: 17.150px; }

/* taskbar */
.taskbar { height: 73px; flex: none; background: #202020; border-top: 2px solid #4a4a4a; color: #fff; display: flex; align-items: center; font-size: 17.500px; }
.weather { width: 477px; display: flex; padding-left: 32px; gap: 7px; line-height: 24px; }
.weather svg { margin-top: -2px; }
.weather div { margin-top: -1px; }
.dim { color: #c8c8c8; }
.one { font: 17px "Open Sans", sans-serif; fill: #111; }
.tsearch { width: 329px; height: 48px; margin-left: 19px; border: 1px solid #5a5a5a; border-radius: 24px; background: #3b3b3b; display: flex; align-items: center; padding-left: 17px; color: #cfcfcf; font-size: 19.200px; }
.tsearch span { width: 160px; margin-left: 15px; padding-bottom: 1px; }
.tv { margin-left: 36px; }
.apps { display: flex; margin-left: 4px; width: 594px; }
.app { width: 66px; height: 60px; display: flex; align-items: center; justify-content: center; position: relative; }
.run::after, .active::after { content: ""; position: absolute; bottom: 1px; left: 29px; width: 9px; height: 5px; border-radius: 3px; background: #9a9a9a; }
.active::before { content: ""; position: absolute; inset: 0 3px; border-radius: 6px; border: 1px solid #3a3a3a; background: #2d2d2d; }
.active svg { position: relative; }
.active::after { left: 21px; width: 24px; background: #4cc2ff; }
.chrome svg { margin: -8px 0 0 8px; }
.s { font: 14px "Open Sans", sans-serif; fill: #fff; }
.tray { display: flex; align-items: center; padding-left: 136px; }
.t-cloud { margin-left: 28px; } .t-wifi { margin-left: 23px; } .t-vol { margin-left: 11px; } .t-bat { margin-left: 11px; }
.clock { width: 106px; text-align: right; line-height: 24px; margin-top: -1px; white-space: nowrap; }
```
